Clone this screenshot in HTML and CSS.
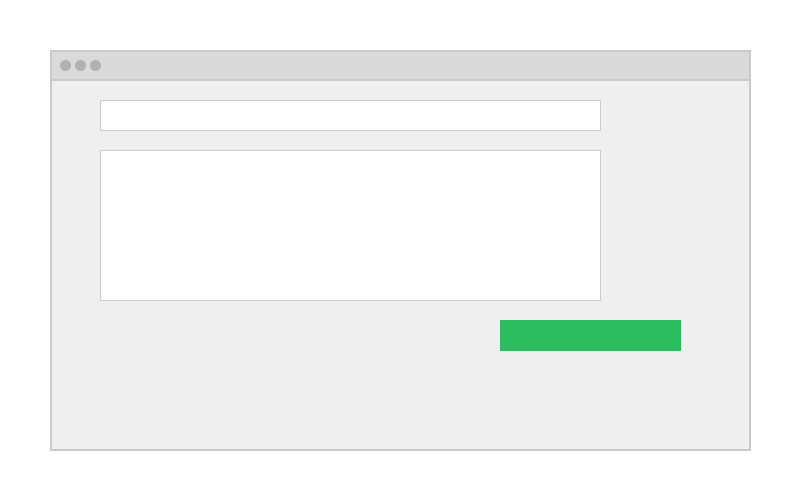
FILE: index.html
```html
<!DOCTYPE html>
<html>
<head>
<meta charset="utf-8">
<link rel="stylesheet" href="styles.css">
</head>
<body>
<div class="window">
  <div class="titlebar">
    <span class="dot"></span><span class="dot"></span><span class="dot"></span>
  </div>
  <div class="content">
    <div class="input"></div>
    <div class="textarea"></div>
    <div class="button"></div>
  </div>
</div>
</body>
</html>
```
FILE: styles.css
```css
html, body { margin: 0; padding: 0; background: #ffffff; }
body { width: 800px; height: 500px; overflow: hidden; font-family: "Liberation Sans", Arial, sans-serif; }
.window {
  box-sizing: border-box;
  margin: 50px 0 0 50px;
  width: 701px;
  height: 401px;
  border: 2px solid #c9c9c9;
  background: #efefef;
}
.titlebar {
  box-sizing: border-box;
  height: 29px;
  background: #dadada;
  border-bottom: 2px solid #c9c9c9;
  display: flex;
  align-items: center;
  gap: 4px;
  padding: 0 0 0 8px;
}
.dot {
  width: 11px;
  height: 11px;
  border-radius: 50%;
  background: #b1b1b1;
}
.content {
  display: flex;
  flex-direction: column;
  align-items: flex-start;
  padding: 19px 0 0 48px;
}
.input {
  box-sizing: border-box;
  width: 501px;
  height: 31px;
  background: #fff;
  border: 1px solid #cccccc;
}
.textarea {
  box-sizing: border-box;
  width: 501px;
  height: 151px;
  margin-top: 19px;
  background: #fff;
  border: 1px solid #cccccc;
}
.button {
  width: 181px;
  height: 31px;
  margin: 19px 0 0 400px;
  background: #2dbd5f;
}
```
